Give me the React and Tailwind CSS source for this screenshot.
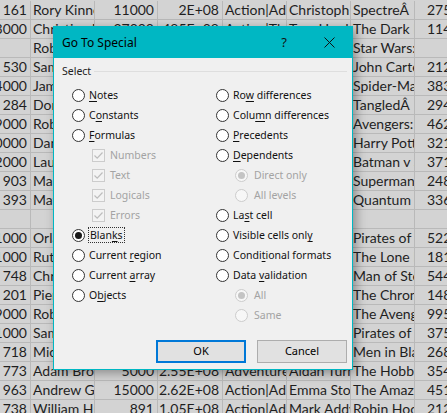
import React from 'react';
import clsx from 'clsx';

// Sheet rows behind the dialog: A, B, C, D, E, F, G, H
const rows = [
  ['161', 'Rory Kinnear', '11000', '2E+08', 'Action|Adventure', 'Christoph Waltz', 'SpectreÂ', '275'],
  ['23000', 'Christian Bale', '27000', '4.485E+08', 'Action|Thriller', 'Tom Hardy', 'The Dark Knight Rises', '1144'],
  ['', 'Rob Walker', '131', '', 'Documentary', 'Doug Walker', 'Star Wars: Episode VII', ''],
  ['530', 'Samantha Morton', '640', '73058679', 'Action|Adventure', 'Daryl Sabara', 'John Carter', '212'],
  ['24000', 'James Franco', '24000', '3.36E+08', 'Action|Adventure', 'J.K. Simmons', 'Spider-Man 3', '383'],
  ['284', 'Donna Murphy', '799', '2E+08', 'Adventure|Animation', 'Brad Garrett', 'TangledÂ', '294'],
  ['19000', 'Robert Downey Jr.', '26000', '4.59E+08', 'Action|Adventure', 'Chris Hemsworth', 'Avengers: Age of Ultron', '462'],
  ['10000', 'Daniel Radcliffe', '25000', '3.02E+08', 'Adventure|Family', 'Alan Rickman', 'Harry Potter', '321'],
  ['12000', 'Lauren Cohan', '15000', '3.3E+08', 'Action|Adventure', 'Henry Cavill', 'Batman v Superman', '371'],
  ['903', 'Marlon Brando', '18000', '2E+08', 'Action|Adventure', 'Kevin Spacey', 'Superman Returns', '248'],
  ['393', 'Mathieu Amalric', '451', '1.68E+08', 'Action|Adventure', 'Giancarlo Giannini', 'Quantum of Solace', '336'],
  ['', '', '', '', '', '', '', ''],
  ['11000', 'Orlando Bloom', '40000', '4.23E+08', 'Action|Adventure', 'Johnny Depp', 'Pirates of the Caribbean', '522'],
  ['11000', 'Ruth Wilson', '40000', '89289910', 'Action|Adventure', 'Johnny Depp', 'The Lone Ranger', '181'],
  ['748', 'Christopher Meloni', '15000', '2.91E+08', 'Action|Adventure', 'Henry Cavill', 'Man of Steel', '544'],
  ['201', 'Pierfrancesco Favino', '22000', '1.42E+08', 'Action|Adventure', 'Peter Dinklage', 'The Chronicles of Narnia', '148'],
  ['19000', 'Robert Downey Jr.', '26000', '6.23E+08', 'Action|Adventure', 'Chris Hemsworth', 'The Avengers', '995'],
  ['11000', 'Sam Claflin', '40000', '2.41E+08', 'Action|Adventure', 'Johnny Depp', 'Pirates of the Caribbean', '375'],
  ['718', 'Michael Stuhlbarg', '10000', '1.79E+08', 'Action|Adventure', 'Will Smith', 'Men in Black 3', '268'],
  ['773', 'Adam Brown', '5000', '2.55E+08', 'Adventure|Fantasy', 'Aidan Turner', 'The Hobbit', '354'],
  ['963', 'Andrew Garfield', '15000', '2.62E+08', 'Action|Adventure', 'Emma Stone', 'The Amazing Spider-Man', '451'],
  ['738', 'William Hurt', '891', '1.05E+08', 'Action|Adventure', 'Mark Addy', 'Robin Hood', '212'],
];

// column widths + alignment (right-aligned columns hold numbers)
const cols = [
  'w-[31px] justify-end pr-[3px]',
  'w-[64px] pl-[2px]',
  'w-[63px] justify-end pr-[3px]',
  'w-[65px] justify-end pr-[3px]',
  'w-[64px] pl-[2px]',
  'w-[64px] pl-[2px]',
  'w-[64px] pl-[2px]',
  'w-[64px] pl-[12px]',
];

const leftOptions = [
  { label: ['', 'N', 'otes'] },
  { label: ['C', 'o', 'nstants'] },
  { label: ['', 'F', 'ormulas'] },
  { label: ['Numbers'], box: true },
  { label: ['Text'], box: true },
  { label: ['Logicals'], box: true },
  { label: ['Errors'], box: true },
  { label: ['Blan', 'k', 's'], checked: true, focus: true },
  { label: ['Current ', 'r', 'egion'] },
  { label: ['Current ', 'a', 'rray'] },
  { label: ['O', 'b', 'jects'] },
];

const rightOptions = [
  { label: ['Ro', 'w', ' differences'] },
  { label: ['Colu', 'm', 'n differences'] },
  { label: ['', 'P', 'recedents'] },
  { label: ['', 'D', 'ependents'] },
  { label: ['Direct only'], sub: true, checked: true },
  { label: ['All levels'], sub: true },
  { label: ['La', 's', 't cell'] },
  { label: ['Visible cells onl', 'y', ''] },
  { label: ['Condi', 't', 'ional formats'] },
  { label: ['Data ', 'v', 'alidation'] },
  { label: ['All'], sub: true, checked: true },
  { label: ['Same'], sub: true },
];

function Radio({ checked, disabled }) {
  return (
    <span
      className={clsx(
        'flex h-[13px] w-[13px] shrink-0 items-center justify-center rounded-full border',
        disabled ? 'border-[#cccccc] bg-[#f7f7f7]' : 'border-[#333333] bg-white'
      )}
    >
      {checked && (
        <span className={clsx('h-[7px] w-[7px] rounded-full', disabled ? 'bg-[#c4c4c4]' : 'bg-[#1a1a1a]')} />
      )}
    </span>
  );
}

function CheckBox() {
  return (
    <span className="flex h-[13px] w-[13px] shrink-0 items-center justify-center border border-[#cccccc] bg-[#f3f3f3]">
      <svg width="11" height="11" viewBox="0 0 11 11" fill="none">
        <path d="M1.5 5.5 L4.2 8.2 L9.5 2.5" stroke="#bdbdbd" strokeWidth="1.2" />
      </svg>
    </span>
  );
}

function Label({ parts, disabled, focus }) {
  const [a, key, b] = parts;
  return (
    <span
      className={clsx(
        'whitespace-nowrap leading-[14px]',
        disabled ? 'text-[#a3a3a3]' : 'text-[#111111]',
        focus ? 'outline outline-1 outline-dotted outline-[#333333] px-[1px]' : ''
      )}
    >
      {a}
      {key && <span className="underline underline-offset-2 decoration-1">{key}</span>}
      {b}
    </span>
  );
}

function Option({ opt }) {
  const disabled = opt.box || opt.sub;
  return (
    <div className={clsx('flex h-[20px] items-center', opt.box ? 'pl-[20px] gap-[5px]' : opt.sub ? 'pl-[19px] gap-[6px]' : 'gap-[4px]')}>
      {opt.box ? <CheckBox /> : <Radio checked={opt.checked} disabled={disabled} />}
      <Label parts={opt.label} disabled={disabled} focus={opt.focus} />
    </div>
  );
}

function GoToSpecial() {
  return (
    <div
      className="absolute left-[53px] top-[26px] flex h-[344px] w-[300px] flex-col border border-[#00b7c3] bg-[#f0f0f0] shadow-[3px_3px_10px_rgba(0,0,0,0.35)]"
      style={{ fontFamily: '"Noto Sans", "Open Sans", sans-serif' }}
    >
      {/* Title bar */}
      <div className="flex h-[31px] shrink-0 items-center bg-[#00b7c3] pl-[8px]">
        <span className="text-[12px] text-black">Go To Special</span>
        <span className="ml-auto mr-[37px] text-[13px] text-[#111111]">?</span>
        <svg className="mr-[17px]" width="11" height="11" viewBox="0 0 11 11">
          <path d="M0.5 0.5 L10.5 10.5 M10.5 0.5 L0.5 10.5" stroke="#111111" strokeWidth="1" />
        </svg>
      </div>

      <div className="flex flex-1 flex-col pl-[8px] pr-[5px] pt-[6px] pb-[6px] text-[10.5px]">
        <div className="flex h-[16px] items-center gap-[3px]">
          <span className="text-[#222222]">Select</span>
          <span className="h-[2px] flex-1 border-t border-[#dedede] border-b-white" />
        </div>

        <div className="mt-[5px] grid grid-cols-[144px_1fr] pl-[10px]">
          <div className="flex flex-col">
            {leftOptions.map((o, i) => (
              <Option key={i} opt={o} />
            ))}
          </div>
          <div className="flex flex-col">
            {rightOptions.map((o, i) => (
              <Option key={i} opt={o} />
            ))}
          </div>
        </div>

        <div className="mt-auto flex justify-end gap-[11px]">
          <button className="h-[23px] w-[90px] border-2 border-[#0078d7] bg-[#e1e1e1] text-[11px] text-black">OK</button>
          <button className="h-[23px] w-[90px] border border-[#adadad] bg-[#e1e1e1] text-[11px] text-black">Cancel</button>
        </div>
      </div>
    </div>
  );
}

export default function App() {
  return (
    <div
      className="relative h-[413px] w-[447px] overflow-hidden bg-[#d3d3d3] pt-[1px] text-[14px] text-[#1f1f1f]"
      style={{ fontFamily: 'Lato, "Open Sans", sans-serif' }}
    >
      {rows.map((r, i) => (
        <div key={i} className="flex h-[19px] border-b border-[#b9b9b9]">
          {r.map((v, j) => (
            <div
              key={j}
              className={clsx('flex h-full shrink-0 items-center overflow-hidden whitespace-nowrap border-r border-[#b9b9b9] leading-none', cols[j])}
            >
              <span className="shrink-0">{v}</span>
            </div>
          ))}
        </div>
      ))}

      <GoToSpecial />
    </div>
  );
}
